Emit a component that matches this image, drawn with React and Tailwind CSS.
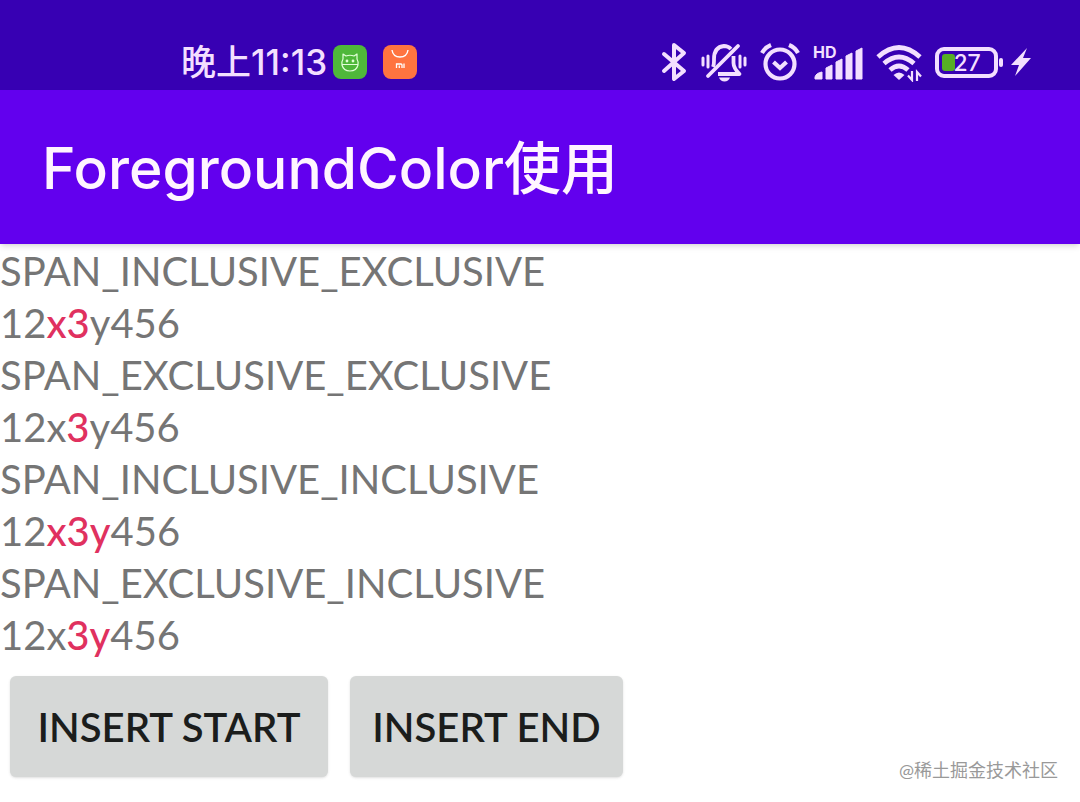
import { useState } from "react";

const rows = [
  { flag: "SPAN_INCLUSIVE_EXCLUSIVE", before: "12", marked: "x3", after: "y456" },
  { flag: "SPAN_EXCLUSIVE_EXCLUSIVE", before: "12x", marked: "3", after: "y456" },
  { flag: "SPAN_INCLUSIVE_INCLUSIVE", before: "12", marked: "x3y", after: "456" },
  { flag: "SPAN_EXCLUSIVE_INCLUSIVE", before: "12x", marked: "3y", after: "456" },
];

function BearIcon() {
  return (
    <svg className="h-[34px] w-[34px]" viewBox="0 0 34 34" fill="none" stroke="#e2ffd8" strokeWidth="1.2">
      <rect width="34" height="34" rx="8" fill="#4fb83a" stroke="none" />
      <path d="M10 14V9l3 2q4-1.500 8 0l3-2v5q1.500 2.500 1 6-1.500 6-8 6t-8-6q-.5-3.500 1-6ZM9 19.500h16" strokeLinejoin="round" />
      <circle cx="14" cy="16" r=".8" fill="#e2ffd8" />
      <circle cx="20" cy="16" r=".8" fill="#e2ffd8" />
    </svg>
  );
}

function StoreIcon() {
  return (
    <svg className="h-[34px] w-[34px]" viewBox="0 0 34 34" fill="none" stroke="#fff" strokeWidth="1.4">
      <rect width="34" height="34" rx="8" fill="#ff7440" stroke="none" />
      <path d="M9 5q1 7 8 7t8-7" />
      <path d="M13.500 23v-4h4.500q1 0 1 1v3M16.300 20.500V23M21 18.500V23" strokeWidth="1.300" />
    </svg>
  );
}

function BluetoothIcon() {
  return (
    <svg className="h-10 w-7" viewBox="0 0 28 40" fill="none" stroke="currentColor" strokeWidth="4" strokeLinejoin="round" strokeLinecap="round">
      <path d="M4 12l20 17-10 8V3l10 8L4 29" />
    </svg>
  );
}

function MutedBellIcon() {
  return (
    <svg className="h-10 w-[46px]" viewBox="0 0 46 40" fill="none" stroke="currentColor" strokeWidth="3.800">
      <path d="M12 25q1-2 1-6v-2Q13 5 23 4q4 0 7 3" />
      <path d="M7 34L37 4" strokeLinecap="round" />
      <path d="M32.500 14v7q0 5 6 11H17" strokeLinejoin="round" />
      <path d="M18 35.500h11q-1.500 4-5.500 4t-5.500-4Z" fill="currentColor" stroke="none" />
      <path d="M2 16v7M7 14v11M39 14v11M44 16v7" strokeWidth="3" strokeLinecap="round" />
    </svg>
  );
}

function AlarmIcon() {
  return (
    <svg className="h-10 w-10" viewBox="0 0 40 40" fill="none" stroke="currentColor" strokeWidth="4.200">
      <circle cx="20" cy="22" r="14.500" />
      <path d="M13.500 20l6.500 6 6.500-6" />
      <path d="M2 11q3-5.500 9-8M38 11q-3-5.500-9-8" />
    </svg>
  );
}

function SignalIcon() {
  return (
    <svg className="h-10 w-[50px]" viewBox="0 0 50 40" fill="currentColor">
      <text x="0" y="16" fontFamily="Inter, sans-serif" fontSize="16" fontWeight="700">HD</text>
      <path d="M2 37v-2q1-4 7-5v7ZM13 37V26l6-3v14ZM23 37V20l6-3v20ZM33 37V14l6-3v26ZM43 37V9l6-3v31Z" stroke="currentColor" strokeWidth="1" strokeLinejoin="round" />
    </svg>
  );
}

function WifiIcon() {
  return (
    <svg className="h-10 w-[46px]" viewBox="0 0 46 40" fill="none" stroke="currentColor" strokeWidth="4.800">
      <path d="M2 15Q23-4 44 15M8 21.500q15-13 30 0M14 28q9-8 18 0" />
      <path d="M17.500 33q5.500-5 11 0L23 38Z" fill="currentColor" stroke="none" />
      <path d="M36 29v9l-4-4.500M41 39v-9l4 4.500" strokeWidth="2.200" />
    </svg>
  );
}

function BatteryIcon() {
  return (
    <svg className="h-10 w-[70px]" viewBox="0 0 70 40" fill="none">
      <rect x="2" y="7" width="59" height="27" rx="7" stroke="currentColor" strokeWidth="4" />
      <rect x="7" y="12" width="13" height="17" rx="3" fill="#56ae25" />
      <rect x="64" y="16" width="4" height="9" rx="2" fill="currentColor" />
      <text x="19" y="29" fill="currentColor" fontFamily="Lato, sans-serif" fontSize="23" fontWeight="600">27</text>
    </svg>
  );
}

function BoltIcon() {
  return (
    <svg className="h-10 w-5" viewBox="0 0 20 40" fill="currentColor">
      <path d="M16 6L0 23h8L4 34l16-18h-8Z" />
    </svg>
  );
}

function StatusBar() {
  return (
    <div className="flex h-[90px] items-end justify-between bg-[#3700b3] pb-2 pl-[181px] pr-[49px] text-[#f3dfff]">
      <div className="flex items-center">
        <span className="font-[Inter,'Noto_Sans_CJK_SC',sans-serif] text-[35px] leading-10 font-medium">晚上11:13</span>
        <div className="ml-[6px] flex gap-4">
          <BearIcon />
          <StoreIcon />
        </div>
      </div>
      <div className="flex items-center gap-[13px]">
        <BluetoothIcon />
        <MutedBellIcon />
        <AlarmIcon />
        <SignalIcon />
        <WifiIcon />
        <div className="flex items-center gap-[6px]">
          <BatteryIcon />
          <BoltIcon />
        </div>
      </div>
    </div>
  );
}

export default function App() {
  // Number of characters added at each end of the marked text
  const [starts, setStarts] = useState(0);
  const [ends, setEnds] = useState(0);

  return (
    <div className="relative min-h-screen bg-white font-[Lato,'Noto_Sans_CJK_SC',sans-serif]">
      <StatusBar />

      {/* Title bar */}
      <header className="flex h-[154px] items-center bg-[#6200ee] px-[42px] pt-1 shadow-md">
        <h1 className="font-[Inter,'Noto_Sans_CJK_SC',sans-serif] text-[57px] leading-[64px] font-medium text-[#fff5ff]">
          ForegroundColor使用
        </h1>
      </header>

      {/* Span samples */}
      <main className="pt-px">
        {rows.map((row) => (
          <div key={row.flag} className="text-[40px] leading-[52px] text-[#757575]">
            <p>{row.flag}</p>
            <p>
              {row.before}
              {"x".repeat(starts)}
              <span className="font-medium text-[#e0315f]">{row.marked}</span>
              {"y".repeat(ends)}
              {row.after}
            </p>
          </div>
        ))}

        <div className="flex gap-[22px] px-[10px] pt-[15px] pb-6">
          <button
            className="h-[101px] w-[318px] rounded-md bg-[#d6d8d7] text-[40px] font-semibold text-[#1b1d1c] shadow"
            onClick={() => setStarts(starts + 1)}
          >
            INSERT START
          </button>
          <button
            className="h-[101px] w-[273px] rounded-md bg-[#d6d8d7] text-[40px] font-semibold text-[#1b1d1c] shadow"
            onClick={() => setEnds(ends + 1)}
          >
            INSERT END
          </button>
        </div>
      </main>

      <span className="absolute right-[22px] bottom-5 text-lg leading-6 text-[#999]">@稀土掘金技术社区</span>
    </div>
  );
}
